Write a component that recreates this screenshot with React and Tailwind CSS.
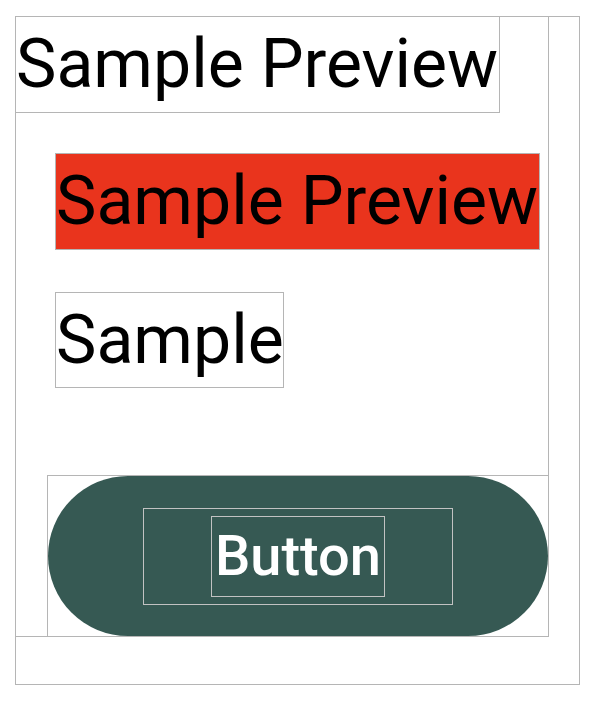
import React from 'react';

const font = { fontFamily: 'Roboto, "Noto Sans", sans-serif' };

export default function App() {
  return (
    <div className="min-h-screen bg-white pt-[16px] pl-[15px]" style={font}>
      {/* Outer bounds */}
      <div className="w-[565px] h-[669px] border border-[#b5b5b5]">
        {/* Column bounds */}
        <div className="w-[533px] h-[620px] border-r border-b border-[#b5b5b5] flex flex-col">
          <div className="-ml-px -mt-px w-[485px] h-[97px] border border-[#b5b5b5] flex items-center text-[68px] leading-none text-black whitespace-nowrap">
            Sample Preview
          </div>

          <div className="ml-[39px] mt-[40px] w-[485px] h-[97px] border border-[#b5b5b5] bg-[#e9341d] flex items-center text-[68px] leading-none text-black whitespace-nowrap">
            Sample Preview
          </div>

          <div className="ml-[39px] mt-[42px] w-[229px] h-[97px] border border-[#b5b5b5] flex items-center text-[68px] leading-none text-black whitespace-nowrap">
            Sample
          </div>

          {/* Button bounds */}
          <div className="ml-[31px] mt-[87px] w-[501px] h-[161px] border-l border-t border-[#b5b5b5] flex">
            <div className="flex-1 rounded-full bg-[#365953] flex items-center justify-center">
              <div className="w-[310px] h-[97px] border border-[#c2c2c2] flex items-center justify-center">
                <div className="w-[174px] h-[81px] border border-[#c2c2c2] flex items-center justify-center text-[56px] font-medium leading-none text-white whitespace-nowrap">
                  Button
                </div>
              </div>
            </div>
          </div>
        </div>
      </div>
    </div>
  );
}
